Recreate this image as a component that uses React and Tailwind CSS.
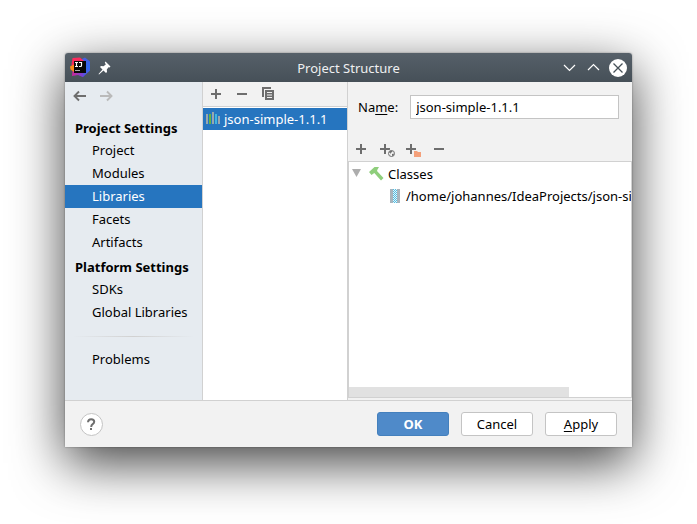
const groups = [
  { title: "Project Settings", items: ["Project", "Modules", "Libraries", "Facets", "Artifacts"] },
  { title: "Platform Settings", items: ["SDKs", "Global Libraries"] },
];

function Svg({ w = 16, h = 16, children }) {
  return (
    <svg width={w} height={h} viewBox={`0 0 ${w} ${h}`} className="block shrink-0" aria-hidden="true">
      {children}
    </svg>
  );
}

function IconButton({ label, children }) {
  return (
    <button type="button" aria-label={label} className="block shrink-0">
      {children}
    </button>
  );
}

function Logo() {
  return (
    <Svg w={21} h={21}>
      <defs>
        <linearGradient id="logo-right" x1="0" y1="0" x2="0" y2="1">
          <stop offset="0" stopColor="#4a5be0" />
          <stop offset="0.5" stopColor="#2f6bf0" />
          <stop offset="1" stopColor="#5b50e0" />
        </linearGradient>
        <linearGradient id="logo-bottom" x1="0" y1="0" x2="1" y2="0">
          <stop offset="0" stopColor="#d0269a" />
          <stop offset="1" stopColor="#6a45dc" />
        </linearGradient>
      </defs>
      <path d="M12 2L15 0.500L20 4.500V13.500L13 20L9 18L11 4Z" fill="url(#logo-right)" />
      <path d="M2 19L2.500 14L14 15L13 20L8 18Z" fill="url(#logo-bottom)" />
      <path d="M2.500 1L10 0.500L14 4V8L3 12L1.500 8Z" fill="#fb2a5c" />
      <path d="M0 9.500L4 7.500V15L0.500 12.500Z" fill="#f98a1b" />
      <rect x="4" y="4" width="12" height="12" fill="#080808" />
      <path d="M5 5.500h3M6.500 5v5M5 9.500h3M9 5.500h3M11.500 5v3.500q0 1-1 1h-1.500" stroke="#fff" strokeWidth="1.200" fill="none" />
      <path d="M5 13.500h5" stroke="#aaa" strokeWidth="1" />
    </Svg>
  );
}

function PlusIcon() {
  return (
    <Svg>
      <path d="M7 3h2v4h4v2H9v4H7V9H3V7h4z" fill="#6e6e6e" />
    </Svg>
  );
}

function MinusIcon() {
  return (
    <Svg>
      <path d="M3 7h10v2H3z" fill="#6e6e6e" />
    </Svg>
  );
}

function SmallPlus() {
  return <path d="M5 3h2v4h4v2H7v4H5V9H1V7h4z" fill="#6e6e6e" />;
}

function TitleBar() {
  return (
    <header className="grid h-[29px] grid-cols-[1fr_auto_1fr] items-center rounded-t-[3px] bg-linear-to-b from-[#566069] to-[#465058] px-[5px] text-[#eff0f1]">
      <div className="flex items-center gap-[7px]">
        <Logo />
        <IconButton label="Pin">
          <Svg w={13} h={14}>
            <path d="M7.500 0.500L12.500 5.500L11.500 6.500L10.500 6.200L8.800 8.500L9 11L8 12L5.500 9.500L1 13.500L0.500 13L4.500 8.500L2 6L3 5L5.500 5.200L7.800 3.500L6.800 1.500Z" fill="#fff" />
          </Svg>
        </IconButton>
      </div>
      <h1>Project Structure</h1>
      <div className="flex items-center justify-end gap-2">
        <IconButton label="Minimize">
          <Svg>
            <path d="M3 5l5.500 5.500L14 5" fill="none" stroke="#fff" strokeWidth="1.200" />
          </Svg>
        </IconButton>
        <IconButton label="Maximize">
          <Svg>
            <path d="M3 10l5.500-5.500L14 10" fill="none" stroke="#fff" strokeWidth="1.200" />
          </Svg>
        </IconButton>
        <IconButton label="Close">
          <Svg w={18} h={18}>
            <circle cx="9" cy="9" r="9" fill="#fff" />
            <path d="M4.500 4.500l9 9M13.500 4.500l-9 9" stroke="#465058" strokeWidth="1.300" />
          </Svg>
        </IconButton>
      </div>
    </header>
  );
}

function NavItem({ label, active }) {
  return (
    <li>
      <a href="#" className={`block h-[23px] pl-[27px] leading-[23px] ${active ? "bg-[#2675bf] text-white" : ""}`}>
        {label}
      </a>
    </li>
  );
}

function Sidebar() {
  return (
    <nav className="w-[138px] shrink-0 border-r border-[#d1d1d1] bg-[#e6ebf0]">
      <div className="flex gap-[11px] px-[7px] pt-[6px]">
        <IconButton label="Back">
          <Svg>
            <path d="M14 8H2.500M7 3.500L2.500 8L7 12.500" fill="none" stroke="#6e6e6e" strokeWidth="1.900" />
          </Svg>
        </IconButton>
        <IconButton label="Forward">
          <Svg>
            <path d="M1 8H12.500M8 3.500L12.500 8L8 12.500" fill="none" stroke="#bababa" strokeWidth="1.900" />
          </Svg>
        </IconButton>
      </div>
      <div className="pt-[11px]">
        {groups.map((g) => (
          <section key={g.title}>
            <h2 className="h-6 pl-[10px] pt-px font-bold leading-6">{g.title}</h2>
            <ul>
              {g.items.map((i) => (
                <NavItem key={i} label={i} active={i === "Libraries"} />
              ))}
            </ul>
          </section>
        ))}
      </div>
      <div className="mx-2 mb-[11px] mt-3 h-px bg-linear-to-r from-transparent via-[#d1d1d1] to-transparent" />
      <ul>
        <NavItem label="Problems" />
      </ul>
    </nav>
  );
}

function LibraryList() {
  return (
    <section className="flex w-[145px] shrink-0 flex-col border-r border-[#d1d1d1] bg-white">
      <div className="flex h-[25px] items-center gap-[10px] border-b border-[#d1d1d1] bg-[#f2f2f2] px-[5px]">
        <IconButton label="Add library">
          <PlusIcon />
        </IconButton>
        <IconButton label="Remove library">
          <MinusIcon />
        </IconButton>
        <IconButton label="Copy library">
          <Svg>
            <path d="M2 1h9v2H4v8H2z" fill="#6e6e6e" />
            <path d="M5 4h9v10H5zM7 6v1h5V6zM7 8.500v1h5v-1zM7 11v1h5v-1z" fill="#6e6e6e" fillRule="evenodd" />
          </Svg>
        </IconButton>
      </div>
      <ul className="pt-px">
        <li className="flex h-[22px] items-center gap-[3px] bg-[#2675bf] pl-[2px] text-white">
          <Svg>
            <path d="M1 3h2v10H1zM7 1h2v12H7zM13 5h2v8h-2z" fill="#9aa7b0" />
            <path d="M4 3h2v10H4z" fill="#62b543" />
            <path d="M10 3h2v10h-2z" fill="#40b6e0" />
          </Svg>
          <span>json-simple-1.1.1</span>
        </li>
      </ul>
    </section>
  );
}

function Details() {
  return (
    <section className="flex min-w-0 flex-1 flex-col bg-[#f2f2f2] pb-[2px]">
      <div className="flex items-center gap-3 pl-[10px] pr-[13px] pt-[13px]">
        <label htmlFor="name">
          Na<span className="underline underline-offset-2">m</span>e:
        </label>
        <input
          id="name"
          defaultValue="json-simple-1.1.1"
          className="h-6 min-w-0 flex-1 border border-[#c4c4c4] bg-white px-[5px] outline-none"
        />
      </div>
      <div className="flex gap-[10px] px-[5px] pb-1 pt-[22px]">
        <IconButton label="Add">
          <PlusIcon />
        </IconButton>
        <IconButton label="Add from web">
          <Svg>
            <SmallPlus />
            <circle cx="12.500" cy="12.500" r="4" fill="#f2f2f2" />
            <circle cx="12.500" cy="12.500" r="3" fill="#f2f2f2" stroke="#6e6e6e" />
            <path d="M10 11l2-1.500 1.500.8-1 1.200-1 .5.500 1.500zM13 13l2-.5-.5 2-1.500.5z" fill="#6e6e6e" />
          </Svg>
        </IconButton>
        <IconButton label="Add folder">
          <Svg>
            <SmallPlus />
            <path d="M8 9h8v7H8z" fill="#f2f2f2" />
            <path d="M9 10h3l1 1h3v5H9z" fill="#f4a07a" />
          </Svg>
        </IconButton>
        <IconButton label="Remove">
          <MinusIcon />
        </IconButton>
      </div>
      <div className="flex min-h-0 flex-1 flex-col overflow-hidden border border-[#d1d1d1] bg-white">
        <ul className="flex-1 pt-px">
          <li>
            <div className="flex h-[22px] items-center gap-1 pl-[3px]">
              <Svg w={12} h={16}>
                <path d="M0 3h9L4.500 11z" fill="#adadad" />
              </Svg>
              <Svg>
                <path d="M1 6L6.500 1H11L9.500 3.500L9 5L15.500 12L13 14.500L6.300 7L3.500 9Z" fill="#8fce7c" />
              </Svg>
              <span>Classes</span>
            </div>
            <ul>
              <li className="flex h-[22px] items-center gap-[3px] whitespace-nowrap pl-[38px]">
                <Svg>
                  <path d="M3 1h3v14H3zM10 1h3v14h-3z" fill="#a9b4bc" />
                  <rect x="6" y="1" width="4" height="14" fill="#e6f5fa" />
                  <path d="M6.500 1v14M8.500 1v14" stroke="#52bde3" strokeDasharray="1 1" />
                  <path d="M7.500 2v13M9.500 2v13" stroke="#52bde3" strokeDasharray="1 1" />
                </Svg>
                <span>/home/johannes/IdeaProjects/json-simple-1.1.1.jar</span>
              </li>
            </ul>
          </li>
        </ul>
        <div className="h-[10px] w-[78%] bg-[#e1e1e1]" />
      </div>
    </section>
  );
}

function Footer() {
  const plain = "h-6 w-[72px] rounded-[3px] border border-[#c4c4c4] bg-white";
  return (
    <footer className="flex h-[47px] items-center gap-3 border-t border-[#d1d1d1] bg-[#f2f2f2] px-[15px]">
      <button
        type="button"
        aria-label="Help"
        className="mr-auto flex size-[23px] items-center justify-center rounded-full border border-[#c4c4c4] bg-white"
      >
        <Svg w={15} h={15}>
          <path d="M4 5.200Q4.200 2.200 7.200 2.200T10.200 4.800Q10.200 6.200 8.700 7.200Q7.200 8.200 7.200 10" fill="none" stroke="#6e6e6e" strokeWidth="2" />
          <rect x="6" y="11" width="2" height="2" fill="#6e6e6e" />
        </Svg>
      </button>
      <button type="button" className="h-6 w-[72px] rounded-[3px] border border-[#4480bd] bg-[#4f8ac9] font-bold text-white">
        OK
      </button>
      <button type="button" className={plain}>Cancel</button>
      <button type="button" className={plain}>
        <span className="underline underline-offset-2">A</span>pply
      </button>
    </footer>
  );
}

export default function App() {
  return (
    <div className="min-h-screen bg-white px-[65px] pb-[77px] pt-[53px] font-['Noto_Sans',sans-serif] text-[13px] leading-[18px] text-black">
      <main className="rounded-t-[3px] shadow-[0_16px_52px_rgba(0,0,0,0.75),0_0_2px_rgba(0,0,0,0.4)]">
        <TitleBar />
        <div className="flex min-h-[318px]">
          <Sidebar />
          <LibraryList />
          <Details />
        </div>
        <Footer />
      </main>
    </div>
  );
}
